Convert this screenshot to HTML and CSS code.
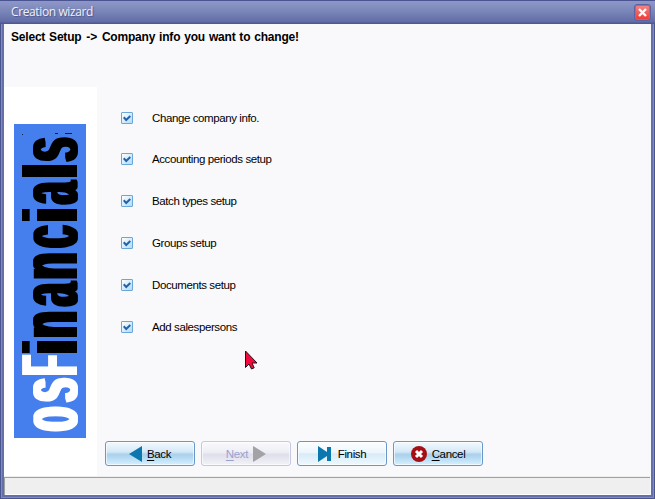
FILE: index.html
```html
<!DOCTYPE html>
<html lang="en">
<head>
<meta charset="utf-8">
<title>Creation wizard</title>
<link rel="stylesheet" href="styles.css">
</head>
<body>
<div class="window">
  <header class="titlebar">
    <span class="title">Creation wizard</span>
    <button class="close" aria-label="Close"><svg width="9" height="9" viewBox="0 0 9 9"><path d="M1 1l7 7M8 1L1 8" stroke="#fff" stroke-width="2.4"/></svg></button>
  </header>
  <div class="client">
    <h1 class="heading">Select Setup <span class="arrow">-&gt;</span> Company info you want to change!</h1>
    <div class="body">
      <aside class="side">
        <svg class="logo" width="72" height="314" viewBox="0 0 72 314">
          <filter id="heavy" filterUnits="userSpaceOnUse" x="0" y="0" width="72" height="314" color-interpolation-filters="sRGB">
            <feMorphology operator="dilate" radius="0 2"/>
          </filter>
          <rect width="72" height="314" fill="#457fee"/>
          <path d="M8 10.500h1M41 9.500h3M51 9.500h7" stroke="#111b35"/>
          <g filter="url(#heavy)">
          <g class="brand" transform="translate(63 314) rotate(-90)">
            <g class="white">
              <text transform="translate(19 0) scale(.49 1.02)">o</text>
              <text transform="translate(48 0) scale(.54 1.02)">s</text>
              <text transform="translate(72.500 0) scale(.4 1)">F</text>
            </g>
            <g>
              <text transform="translate(91 0) scale(.74 .95)">i</text>
              <text transform="translate(113.500 0) scale(.55 1.02)">n</text>
              <text transform="translate(143.500 0) scale(.52 1.02)">a</text>
              <text transform="translate(172 0) scale(.55 1.02)">n</text>
              <text transform="translate(201.500 0) scale(.49 1.02)">c</text>
              <text transform="translate(223 0) scale(.74 .95)">i</text>
              <text transform="translate(245 0) scale(.5 1.02)">a</text>
              <text transform="translate(267 0) scale(.74 .95)">l</text>
              <text transform="translate(288.500 0) scale(.54 1.02)">s</text>
            </g>
          </g>
          </g>
        </svg>
      </aside>
      <main class="main">
        <ul class="options">
          <li><i class="check"><svg width="8" height="7" viewBox="0 0 8 7"><path d="M.7 2.3L3.2 5 7.3 1" /></svg></i><span>Change company info.</span></li>
          <li><i class="check"><svg width="8" height="7" viewBox="0 0 8 7"><path d="M.7 2.3L3.2 5 7.3 1" /></svg></i><span>Accounting periods setup</span></li>
          <li><i class="check"><svg width="8" height="7" viewBox="0 0 8 7"><path d="M.7 2.3L3.2 5 7.3 1" /></svg></i><span>Batch types setup</span></li>
          <li><i class="check"><svg width="8" height="7" viewBox="0 0 8 7"><path d="M.7 2.3L3.2 5 7.3 1" /></svg></i><span>Groups setup</span></li>
          <li><i class="check"><svg width="8" height="7" viewBox="0 0 8 7"><path d="M.7 2.3L3.2 5 7.3 1" /></svg></i><span>Documents setup</span></li>
          <li><i class="check"><svg width="8" height="7" viewBox="0 0 8 7"><path d="M.7 2.3L3.2 5 7.3 1" /></svg></i><span>Add salespersons</span></li>
        </ul>
        <div class="buttons">
          <button class="btn strong"><svg width="13" height="16" viewBox="0 0 13 16"><path d="M13 0v16L0 8z" fill="#0c76ae"/></svg><span><u>B</u>ack</span></button>
          <button class="btn off"><span><u>N</u>ext</span><svg width="13" height="16" viewBox="0 0 13 16"><path d="M0 0v16l13-8z" fill="#a3a3a7"/></svg></button>
          <button class="btn finish"><svg width="13" height="16" viewBox="0 0 13 16"><path d="M0 0l9 6V1h4v14H9v-5l-9 6z" fill="#0c76ae"/></svg><span>Finish</span></button>
          <button class="btn strong"><svg width="16" height="16" viewBox="0 0 16 16"><circle cx="8" cy="8" r="8" fill="#a50f14"/><path d="M5 5l6 6M11 5l-6 6" stroke="#fff" stroke-width="3"/></svg><span><u>C</u>ancel</span></button>
        </div>
      </main>
    </div>
    <footer class="status"></footer>
  </div>
  <svg class="cursor" width="14" height="20" viewBox="0 0 14 20"><path d="M1.500 1v16.500l3.500-3.500 2.500 5 2.700-1.200-2.200-4.800h5z" fill="#f5083c" stroke="#2a1018" stroke-width="1"/></svg>
</div>
</body>
</html>
```
FILE: styles.css
```css
* { box-sizing: border-box; }
body { margin: 0; font: 11.5px/14px "Liberation Sans", Arial, sans-serif; color: #000; }
button { font: inherit; padding: 0; }
.window {
  position: relative;
  width: 655px;
  height: 499px;
  padding: 0 4px 4px;
  display: flex;
  flex-direction: column;
  background: #6570aa;
  box-shadow: inset 0 0 0 1px #4a5590, inset 0 0 0 2px #7f8bc1;
}
.titlebar {
  height: 24px;
  margin: 0 -4px;
  padding: 0 5px 0 11px;
  display: flex;
  align-items: center;
  justify-content: space-between;
  background: linear-gradient(#4a5490 0 1px, #8d97c9 1px, #8791c2 5px, #7681b6 13px, #626da7 22px, #4d5894 23px);
}
.title {
  font: 12px/16px "Open Sans", sans-serif;
  letter-spacing: -.38px;
  color: #eef1fb;
  text-shadow: 1px 1px 1px #4b568d;
}
.close {
  width: 15px;
  height: 15px;
  display: grid;
  place-items: center;
  border: 1px solid #d65b68;
  border-radius: 2px;
  background: linear-gradient(#f28483, #ee3c3a);
  outline: 1px solid #5b64a0;
}
.client { flex: 1; display: flex; flex-direction: column; background: #f9f9fc; }
.heading {
  height: 63px;
  margin: 0;
  padding: 6px 7px;
  font-size: 12px;
  line-height: 14px;
  letter-spacing: -.2px;
  word-spacing: .8px;
}
.arrow { margin: 0 1px; }
.body { flex: 1; display: flex; }
.side { width: 93px; padding: 37px 10px 0; background: #fff; }
.logo { display: block; overflow: visible; }
.brand text { font: bold 80px "Liberation Sans", sans-serif; text-anchor: middle; }
.brand .white text { fill: #fff; }
.main { flex: 1; display: flex; flex-direction: column; justify-content: space-between; padding: 24px 8px 10px; }
.options { list-style: none; margin: 0; padding: 0 0 0 16px; display: grid; grid-template-rows: 41px 42px 42px 42px 42px 14px; }
.options li { display: flex; align-items: flex-start; gap: 19px; letter-spacing: -.4px; }
.check {
  width: 12px;
  height: 12px;
  margin-top: 1px;
  display: grid;
  place-items: center;
  border: 1px solid #6ba6d8;
  border-radius: 1px;
  background: linear-gradient(135deg, #fff, #aedcf8);
}
.check path { fill: none; stroke: #2563a9; stroke-width: 2; }
.buttons { display: flex; gap: 6px; }
.btn {
  width: 90px;
  height: 25px;
  display: flex;
  align-items: center;
  justify-content: center;
  gap: 5px;
  border: 1px solid #6b97c8;
  border-radius: 3px;
  color: #000;
  letter-spacing: -.35px;
  background: linear-gradient(#fcfeff, #edf6fc 45%, #d8ebf7 52%, #eef9ff);
  box-shadow: inset 0 0 0 1px #ffffffa0;
}
.btn u { text-underline-offset: 2px; }
.finish { gap: 7px; }
.strong { background: linear-gradient(#f4fafe, #d5e8f6 42%, #a9d0ec 55%, #d5f1ff); }
.off { border-color: #c5c8e0; color: #9ba1cf; background: linear-gradient(#fafafd, #ededf5 45%, #dfdfeb 55%, #f2f2f8); }
.status { height: 19px; margin-right: 1px; background: #efefef; border-top: 1px solid #eee; box-shadow: inset 1px 1px #a0a0a0, inset 0 -1px #fff; }
.cursor { position: absolute; left: 244px; top: 350px; }
```
